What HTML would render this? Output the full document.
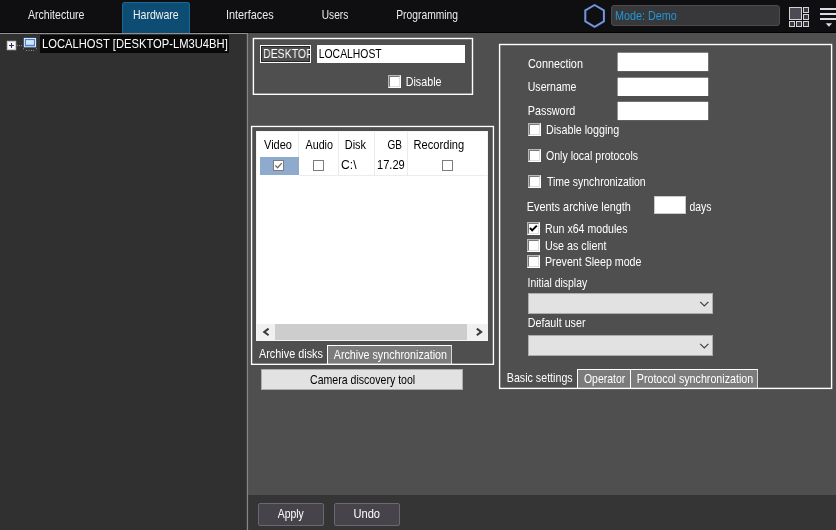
<!DOCTYPE html>
<html lang="en"><head><meta charset="utf-8"><title>Hardware</title>
<style>
html,body{margin:0;padding:0}
body{width:836px;height:530px;position:relative;overflow:hidden;background:#4f4f4f;font-family:"Liberation Sans",sans-serif}
div,span,svg{position:absolute;box-sizing:border-box}
.txt{left:0;top:0;will-change:transform}
.t{will-change:transform;white-space:pre;line-height:1;transform-origin:0 0;font-family:"Liberation Sans",sans-serif}
.topbar{left:0;top:0;width:836px;height:32px;background:#0f0f11}
.topline{left:0;top:32px;width:836px;height:1px;background:#020202}
.tabsel{left:122px;top:2px;width:68px;height:31px;background:#0d4c73;border:1px solid #1a6893;border-bottom:none;border-radius:3px 3px 0 0}
.left{left:0;top:33px;width:247px;height:497px;background:#303030}
.sel{left:40px;top:35px;width:189px;height:18px;background:#0a0909}
.bottom{left:248px;top:495px;width:588px;height:35px;background:#363536}
.btn{height:23px;top:503px;background:#46444a;border:1px solid #6a6870;border-radius:2px}
.inp{background:#fff}
.cb{width:13px;height:13px;background:#fff;border-style:solid;border-width:1px;border-color:#b8b8b8 #fff #fff #b8b8b8}
.cb::after{content:"";position:absolute;left:0;top:0;width:11px;height:11px;box-sizing:border-box;border-style:solid;border-width:1px;border-color:#787878 #dedede #dedede #787878}
.combo{left:528px;width:185px;height:21px;background:#e2e2e2;border:1px solid #adadad}
.tab{background:#7b7b7b;border:1px solid #fff;border-right-color:#d8d8d8;border-bottom:none}
.lcb{width:11px;height:11px;top:160px;background:#fff;border:1px solid #7d7d7d}
.vsep{top:132px;width:1px;height:43px;background:#ebebeb}

</style></head>
<body>
<div class="topbar"></div>
<div class="topline"></div>
<div class="tabsel"></div>

<!-- hexagon logo -->
<svg style="left:582px;top:2px" width="26" height="28" viewBox="0 0 26 28"><polygon points="12.6,3 21.9,8.4 21.9,19.4 12.6,24.8 3.3,19.4 3.3,8.4" fill="none" stroke="#7394e2" stroke-width="2" stroke-linejoin="round"/></svg>
<!-- mode box -->
<div style="left:611px;top:5px;width:169px;height:21px;background:#38383a;border:1px solid #4c4c50;border-radius:3px"></div>
<!-- grid icon -->
<svg style="left:788px;top:6px" width="23" height="23" viewBox="0 0 23 23">
<rect x="1.5" y="1.5" width="12" height="12" fill="#4b4b53" stroke="#d2d2d8" stroke-width="1"/>
<rect x="15.5" y="1.5" width="5" height="5" fill="#3a3a40" stroke="#d2d2d8"/>
<rect x="15.5" y="8.5" width="5" height="5" fill="#3a3a40" stroke="#d2d2d8"/>
<rect x="1.5" y="15.5" width="5" height="5" fill="#3a3a40" stroke="#d2d2d8"/>
<rect x="8.5" y="15.5" width="5" height="5" fill="#3a3a40" stroke="#d2d2d8"/>
<rect x="15.5" y="15.5" width="5" height="5" fill="#3a3a40" stroke="#d2d2d8"/>
</svg>
<!-- hamburger -->
<svg style="left:818px;top:6px" width="18" height="23" viewBox="0 0 18 23">
<rect x="2" y="2" width="16" height="2" fill="#dcdce4"/>
<rect x="2" y="7" width="16" height="2" fill="#dcdce4"/>
<rect x="2" y="12" width="16" height="2" fill="#dcdce4"/>
<polygon points="7.7,17.2 14.2,17.2 10.95,20.8" fill="#dcdce4"/>
</svg>

<!-- left tree panel -->
<div class="left"></div>
<div class="sel"></div>
<svg style="left:0;top:33px" width="44" height="22" viewBox="0 33 44 22">
<rect x="7.3" y="41.3" width="8.4" height="8.4" fill="#fbfbfb" stroke="#cfcfcf" stroke-width="1"/>
<path d="M9.1 45.5h4.8M11.5 43.1v4.8" stroke="#27306b" stroke-width="1.1" fill="none"/>
<circle cx="17.4" cy="45.6" r=".55" fill="#a0a0a0"/><circle cx="19.4" cy="45.6" r=".55" fill="#a0a0a0"/><circle cx="21.4" cy="45.6" r=".55" fill="#a0a0a0"/>
<rect x="23.8" y="37.9" width="12.3" height="9.4" fill="#d6e9fc"/>
<rect x="24.9" y="39" width="10.1" height="7.3" fill="#4784d6"/>
<rect x="26" y="40.1" width="7.9" height="4.7" fill="#d2e6fb"/>
<g fill="#aab4c0"><circle cx="23.4" cy="48.7" r=".5"/><circle cx="36.5" cy="48.7" r=".5"/><circle cx="26.4" cy="50.4" r=".5"/><circle cx="29" cy="50.4" r=".5"/><circle cx="31.5" cy="50.4" r=".5"/><circle cx="33.6" cy="50.4" r=".5"/></g>
</svg>

<!-- group 1 -->
<div style="left:260px;top:45px;width:51px;height:18px;border:1px solid #fff;background:#4d4d4d;overflow:hidden">
  <div style="left:0;top:0;width:49px;height:16px;border:1px solid #262626"></div>
  <span class="t" style="left:1.8px;top:1px;font-size:13px;color:#fff;transform:scaleX(0.81)">DESKTOP-LM3U4BH</span>
</div>
<div class="inp" style="left:317px;top:45px;width:148px;height:18px"></div>
<div class="cb" style="left:388px;top:75px"></div>

<!-- group 2: archive -->
<div style="left:252px;top:127px;width:241px;height:237px;border:1px solid #3e3e3e"></div>
<div style="left:256px;top:131px;width:232.3px;height:210px;background:#fff;border:1px solid #f4f4f4"></div>
<div style="left:299px;top:175px;width:189px;height:1px;background:#ececec"></div>
<div class="vsep" style="left:298px"></div>
<div class="vsep" style="left:338px"></div>
<div class="vsep" style="left:374px"></div>
<div class="vsep" style="left:407px"></div>
<div style="left:260px;top:157px;width:39px;height:18px;background:#8eaacd"></div>
<div class="lcb" style="left:273px"></div>
<svg style="left:273px;top:160px" width="11" height="11" viewBox="0 0 11 11"><path d="M2.3 5.4l2.2 2.3l4.3-4.6" stroke="#6a6a6a" stroke-width="1.3" fill="none"/></svg>
<div class="lcb" style="left:313px"></div>
<div class="lcb" style="left:442px"></div>
<!-- scrollbar -->
<div style="left:257px;top:324px;width:231px;height:15.5px;background:#f0f0f0"></div>
<div style="left:274.8px;top:324px;width:192.3px;height:15.5px;background:#cdcdcd"></div>
<svg style="left:256.5px;top:324px" width="232" height="16" viewBox="0 0 232 16">
<path d="M11.6 4.6L7.2 7.9l4.4 3.3" stroke="#3c3c3c" stroke-width="2" fill="none"/>
<path d="M219.8 4.6l4.4 3.3l-4.4 3.3" stroke="#3c3c3c" stroke-width="2" fill="none"/>
</svg>
<!-- tabs -->
<div class="tab" style="left:327px;top:345px;width:125px;height:19px"></div>
<!-- camera discovery -->
<div style="left:261px;top:369px;width:202px;height:20.5px;background:#e2e2e2;border:1px solid #adadad"></div>

<!-- group 3: settings -->
<div class="cb" style="left:528px;top:123px"></div>
<div class="cb" style="left:528px;top:149px"></div>
<div class="cb" style="left:528px;top:175px"></div>
<div class="inp" style="left:654px;top:196px;width:32px;height:18px;border:1px solid #c8c8c8"></div>
<div class="cb" style="left:527px;top:222px"></div>
<svg style="left:527px;top:222px" width="13" height="13" viewBox="0 0 13 13"><path d="M3 6l2.2 2.4l4.6-4.8" stroke="#000" stroke-width="2" fill="none"/></svg>
<div class="cb" style="left:527px;top:239px"></div>
<div class="cb" style="left:527px;top:255px"></div>
<div class="combo" style="top:293px"></div>
<div class="combo" style="top:335px"></div>
<svg style="left:698px;top:299px" width="13" height="10" viewBox="0 0 13 10"><path d="M2.2 2.8l4.1 4.1l4.1-4.1" stroke="#404040" stroke-width="1.2" fill="none"/></svg>
<svg style="left:698px;top:341px" width="13" height="10" viewBox="0 0 13 10"><path d="M2.2 2.8l4.1 4.1l4.1-4.1" stroke="#404040" stroke-width="1.2" fill="none"/></svg>
<div class="tab" style="left:577px;top:369px;width:53.5px;height:20px"></div>
<div class="tab" style="left:630px;top:369px;width:127.5px;height:20px"></div>

<!-- bottom bar -->
<div class="bottom"></div>
<div class="btn" style="left:258px;width:66px"></div>
<div class="btn" style="left:334px;width:66px"></div>

<!-- line overlay: panel separator + group box frames -->
<svg style="left:0;top:0" width="836" height="530" viewBox="0 0 836 530">
<path d="M0 33.5H247.45" fill="none" stroke="#909096" stroke-width="1"/><path d="M247.45 33V530" fill="none" stroke="#86868f" stroke-width="1.25"/>
<g fill="#fff">
<rect x="617.6" y="52.7" width="90.6" height="18.4"/>
<rect x="617.6" y="77.7" width="90.6" height="18.3"/>
<rect x="617.6" y="101.8" width="90.6" height="18.3"/>
</g>
<g fill="none" stroke="#fff" stroke-width="1.4">
<rect x="253.4" y="38.5" width="219.1" height="55.8"/>
<rect x="251.6" y="126.5" width="241.8" height="237.8"/>
<rect x="499.6" y="44.5" width="332" height="343.9"/>
</g>
</svg>

<svg class="txt" width="836" height="530" viewBox="0 0 836 530" font-family="Liberation Sans, sans-serif" font-size="13" fill="#ffffff" xml:space="preserve">
<text id="t0" transform="translate(28.00,19.0) scale(0.8145,1)" fill="#ececec">Architecture</text>
<text id="t1" transform="translate(133.00,19.0) scale(0.8123,1)" fill="#f2f2f2">Hardware</text>
<text id="t2" transform="translate(226.00,19.0) scale(0.8371,1)" fill="#ececec">Interfaces</text>
<text id="t3" transform="translate(321.75,19.0) scale(0.7817,1)" fill="#ececec">Users</text>
<text id="t4" transform="translate(396.25,19.0) scale(0.7918,1)" fill="#ececec">Programming</text>
<text id="t5" transform="translate(615.00,19.5) scale(0.8302,1)" fill="#1f97d8">Mode: Demo</text>
<text id="t6" transform="translate(42.00,47.7) scale(0.8631,1)">LOCALHOST [DESKTOP-LM3U4BH]</text>
<text id="t7" transform="translate(318.75,57.8) scale(0.8002,1)" fill="#000000">LOCALHOST</text>
<text id="t8" transform="translate(405.75,85.5) scale(0.8256,1)">Disable</text>
<text id="t9" transform="translate(528.00,68.0) scale(0.8366,1)">Connection</text>
<text id="t10" transform="translate(527.75,90.7) scale(0.8135,1)">Username</text>
<text id="t11" transform="translate(527.75,114.5) scale(0.8331,1)">Password</text>
<text id="t12" transform="translate(546.00,134.0) scale(0.8243,1)">Disable logging</text>
<text id="t13" transform="translate(546.00,160.0) scale(0.8132,1)">Only local protocols</text>
<text id="t14" transform="translate(547.00,185.8) scale(0.8071,1)">Time synchronization</text>
<text id="t15" transform="translate(526.75,211.0) scale(0.8389,1)">Events archive length</text>
<text id="t16" transform="translate(689.50,211.0) scale(0.8021,1)">days</text>
<text id="t17" transform="translate(545.00,232.8) scale(0.8156,1)">Run x64 modules</text>
<text id="t18" transform="translate(545.00,249.6) scale(0.8266,1)">Use as client</text>
<text id="t19" transform="translate(545.00,265.5) scale(0.8194,1)">Prevent Sleep mode</text>
<text id="t20" transform="translate(527.50,287.3) scale(0.8029,1)">Initial display</text>
<text id="t21" transform="translate(527.75,327.2) scale(0.8241,1)">Default user</text>
<text id="t22" transform="translate(506.75,382.0) scale(0.8232,1)">Basic settings</text>
<text id="t23" transform="translate(584.00,383.0) scale(0.8041,1)">Operator</text>
<text id="t24" transform="translate(636.75,383.0) scale(0.8227,1)">Protocol synchronization</text>
<text id="t25" transform="translate(264.00,148.8) scale(0.8484,1)" fill="#000000">Video</text>
<text id="t26" transform="translate(305.50,148.8) scale(0.8274,1)" fill="#000000">Audio</text>
<text id="t27" transform="translate(344.75,148.8) scale(0.8421,1)" fill="#000000">Disk</text>
<text id="t28" transform="translate(387.50,148.8) scale(0.7747,1)" fill="#000000">GB</text>
<text id="t29" transform="translate(413.50,148.8) scale(0.8571,1)" fill="#000000">Recording</text>
<text id="t30" transform="translate(341.00,169.3) scale(0.9343,1)" fill="#000000">C:\</text>
<text id="t31" transform="translate(377.00,169.3) scale(0.8546,1)" fill="#000000">17.29</text>
<text id="t32" transform="translate(259.00,358.0) scale(0.8358,1)">Archive disks</text>
<text id="t33" transform="translate(333.75,359.0) scale(0.8267,1)">Archive synchronization</text>
<text id="t34" transform="translate(310.00,383.8) scale(0.8139,1)" fill="#000000">Camera discovery tool</text>
<text id="t35" transform="translate(277.75,517.5) scale(0.7993,1)">Apply</text>
<text id="t36" transform="translate(353.50,517.5) scale(0.8555,1)">Undo</text>
</svg>
</body></html>
